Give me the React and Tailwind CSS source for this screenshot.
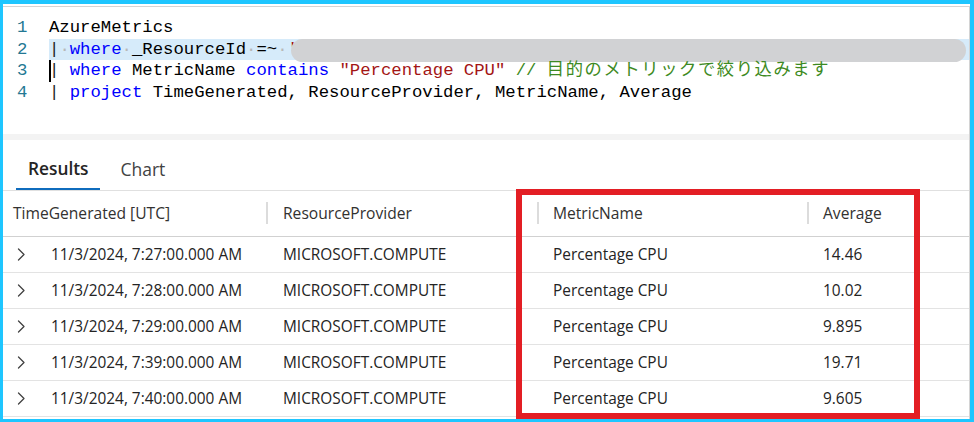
import React from "react";

const mono = { fontFamily: '"Liberation Mono", "Noto Sans CJK JP", monospace' };
const ui = { fontFamily: '"Open Sans", "Noto Sans", sans-serif' };

const rows = [
  ["11/3/2024, 7:27:00.000 AM", "14.46"],
  ["11/3/2024, 7:28:00.000 AM", "10.02"],
  ["11/3/2024, 7:29:00.000 AM", "9.895"],
  ["11/3/2024, 7:39:00.000 AM", "19.71"],
  ["11/3/2024, 7:40:00.000 AM", "9.605"],
];

function Dot() {
  return <span className="text-[#b8b8b8]">·</span>;
}

function Chevron() {
  return (
    <svg width="9" height="13" viewBox="0 0 9 13" className="shrink-0">
      <polyline points="1.5,1 7,6.5 1.5,12" fill="none" stroke="#424242" strokeWidth="1.3" strokeLinecap="round" strokeLinejoin="round" />
    </svg>
  );
}

export default function App() {
  return (
    <div className="relative w-[974px] h-[422px] bg-white overflow-hidden">
      <div className="w-full h-full box-border border-t-4 border-l-[3px] border-r-4 border-b-[3px] border-[#1ec6ff] pt-[2px] flex flex-col">
        <div className="flex-1 flex flex-col border-t border-r border-[#d4d4d4]">
          {/* code editor */}
          <div className="h-[127px] pt-[10px] text-[17.3px] leading-[21.7px]" style={mono}>
            {[
              <span className="text-[#000]">AzureMetrics</span>,
              <span className="relative block">
                <span className="text-[#222]">|</span><Dot /><span className="text-[#0000ff]">where</span><Dot /><span className="text-[#000]">_ResourceId</span><Dot /><span className="text-[#000]">=~</span><Dot /><span className="text-[#a31515]">'</span>
                <span className="absolute left-[242px] top-0 w-[675px] h-[23px] rounded-full bg-[#d1d2d4]"></span>
              </span>,
              <span className="relative block">
                <span className="absolute left-0 top-0 w-[2px] h-full bg-black"></span>
                <span className="text-[#222]">|</span> <span className="text-[#0000ff]">where</span> <span className="text-[#000]">MetricName</span> <span className="text-[#0000ff]">contains</span> <span className="text-[#a31515]">"Percentage CPU"</span> <span className="text-[#3d8a22]">// <span className="tracking-[1.6px]">目的のメトリックで絞り込みます</span></span>
              </span>,
              <span>
                <span className="text-[#222]">|</span> <span className="text-[#0000ff]">project</span> <span className="text-[#000]">TimeGenerated, ResourceProvider, MetricName, Average</span>
              </span>,
            ].map((content, i) => (
              <div key={i} className="flex h-[21.7px] whitespace-pre">
                <div className="w-[46px] pl-[14px] text-[#237893]">{i + 1}</div>
                <div className={"flex-1 " + (i === 1 ? "bg-[#d6ebfa]" : "")}>{content}</div>
              </div>
            ))}
          </div>
          <div className="h-[6px] bg-[#f3f3f3]"></div>

          {/* tabs */}
          <div className="h-[51px] flex items-end pl-[13px] border-b border-[#e0e0e0]" style={ui}>
            <div className="flex flex-col items-center">
              <div className="px-3 text-[17.3px] font-semibold text-[#242424] leading-[20px] pb-[9px]">Results</div>
              <div className="w-full h-[2px] bg-[#0f6cbd]"></div>
            </div>
            <div className="flex flex-col items-center ml-[8px]">
              <div className="px-3 text-[17.5px] text-[#424242] leading-[20px] pb-[9px]">Chart</div>
              <div className="w-full h-[2px]"></div>
            </div>
          </div>

          {/* table */}
          <div className="text-[15.4px] text-[#242424]" style={ui}>
            <div className="grid grid-cols-[263px_271px_270px_1fr] h-[46px] border-b border-[#d1d1d1] items-center text-[#323130] font-medium text-[15.6px]">
              <div className="pl-[10px]">TimeGenerated [UTC]</div>
              <div className="flex items-center"><div className="w-[2px] h-[22px] bg-[#dcdcdc]"></div><div className="ml-[15px]">ResourceProvider</div></div>
              <div className="flex items-center"><div className="w-[2px] h-[22px] bg-[#dcdcdc]"></div><div className="ml-[14px]">MetricName</div></div>
              <div className="flex items-center"><div className="w-[2px] h-[22px] bg-[#dcdcdc]"></div><div className="ml-[14px]">Average</div></div>
            </div>
            {rows.map(([t, v], i) => (
              <div key={i} className="grid grid-cols-[263px_271px_270px_1fr] h-[36px] border-b border-[#e3e3e3] items-center">
                <div className="flex items-center pl-[14px]">
                  <Chevron />
                  <span className="ml-[25px]">{t}</span>
                </div>
                <div className="pl-[17px]">MICROSOFT.COMPUTE</div>
                <div className="pl-[16px]">Percentage CPU</div>
                <div className="pl-[16px]">{v}</div>
              </div>
            ))}
          </div>
        </div>
      </div>
      {/* annotation box */}
      <div className="absolute left-[516px] top-[189px] w-[404px] h-[230px] border-[6px] border-[#e31e24]"></div>
    </div>
  );
}
